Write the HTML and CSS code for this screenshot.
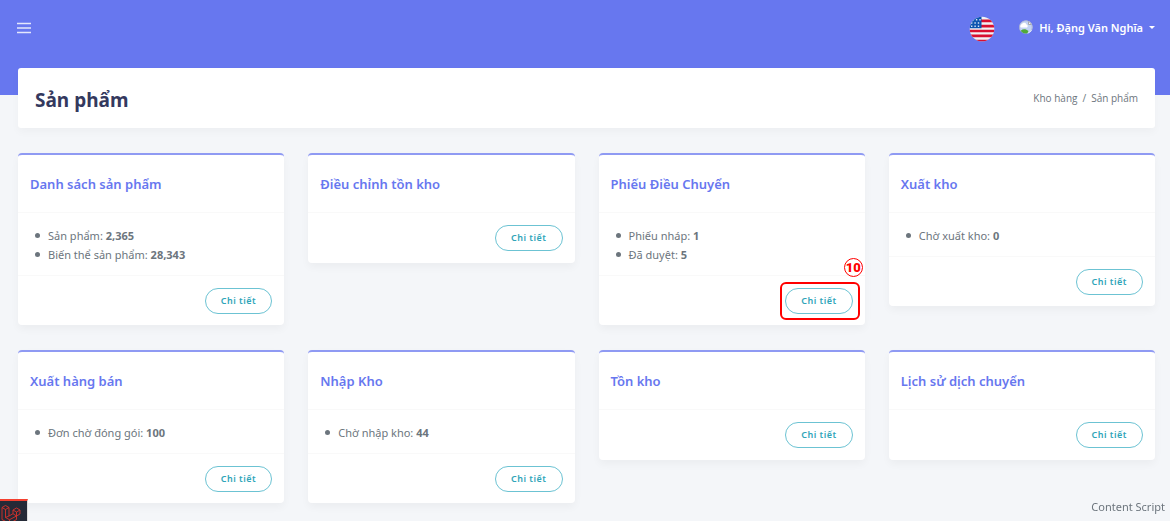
FILE: index.html
```
<!DOCTYPE html>
<html lang="vi">
<head>
<meta charset="utf-8">
<meta name="viewport" content="width=device-width, initial-scale=1">
<title>Sản phẩm</title>
<link rel="stylesheet" href="styles.css">
</head>
<body>
<header class="navbar">
  <button class="menu-toggle" type="button" aria-label="Menu">
    <svg width="14" height="12" viewBox="0 0 14 12"><path d="M0 1.5h14M0 6h14M0 10.5h14" stroke="#e4e7fc" stroke-width="1.6"/></svg>
  </button>
  <div class="navbar-right">
    <a class="language" href="#" aria-label="English">
      <svg width="26" height="26" viewBox="0 0 26 26">
        <defs><clipPath id="round"><circle cx="13" cy="13" r="12.3"/></clipPath></defs>
        <g clip-path="url(#round)">
          <path fill="#f2f2f4" d="M0 0h26v26H0z"/>
          <path d="M12 4.800h14M12 10.200h14M0 15h26M0 19.800h26M0 25h26" stroke="#d80f30" stroke-width="2.7"/>
          <path fill="#0b55b0" d="M0 0h12.5v12.3H0z"/>
          <path d="M3.500 3.700h9M2 7h10M2 10.200h10" stroke="#d5e2f3" stroke-width="1.400" stroke-dasharray="1.400 2"/>
        </g>
      </svg>
    </a>
    <button class="user" type="button">
      <svg class="avatar" width="14" height="14" viewBox="0 0 14 14">
        <defs><clipPath id="avatar-shape"><circle cx="7" cy="7" r="6.600"/></clipPath></defs>
        <g clip-path="url(#avatar-shape)">
          <path fill="#c2d3f4" d="M0 0h14v14H0z"/>
          <path fill="#fff" d="M2 7.500a2 2 0 0 1 1-3.500 2.500 2.500 0 0 1 4.500.5 1.700 1.700 0 0 1 .5 3z"/>
          <path fill="#51a938" d="M0 14c1-4 4-5.500 7-4.500L9.500 11 8 14z"/>
          <path fill="#f4f4f4" d="M8 14l6-5v2l-4 3z"/>
          <path fill="#6777ef" d="M10 14l4-3.500V14z"/>
          <path fill="#f4f4f4" stroke="#999" stroke-width=".8" d="M9.500 1v3.500H13z"/>
        </g>
        <path d="M12.500 10A6.400 6.400 0 1 0 2 11.500" fill="none" stroke="#b0b5cf" stroke-width=".8"/>
      </svg>
      <span>Hi, Đặng Văn Nghĩa</span>
      <span class="caret"></span>
    </button>
  </div>
</header>

<main class="content">
  <section class="page-head">
    <h1>Sản phẩm</h1>
    <nav class="breadcrumb" aria-label="Breadcrumb">
      <a href="#">Kho hàng</a><span>/</span><span>Sản phẩm</span>
    </nav>
  </section>

  <div class="cards">
    <article class="card">
      <h2>Danh sách sản phẩm</h2>
      <ul><li>Sản phẩm: <b>2,365</b></li><li>Biến thể sản phẩm: <b>28,343</b></li></ul>
      <footer><a class="btn" href="#">Chi tiết</a></footer>
    </article>
    <article class="card">
      <h2>Điều chỉnh tồn kho</h2>
      <footer><a class="btn" href="#">Chi tiết</a></footer>
    </article>
    <article class="card">
      <h2>Phiếu Điều Chuyển</h2>
      <ul><li>Phiếu nháp: <b>1</b></li><li>Đã duyệt: <b>5</b></li></ul>
      <footer><span class="marked"><a class="btn" href="#">Chi tiết</a><span class="outline"></span><span class="step">10</span></span></footer>
    </article>
    <article class="card">
      <h2>Xuất kho</h2>
      <ul><li>Chờ xuất kho: <b>0</b></li></ul>
      <footer><a class="btn" href="#">Chi tiết</a></footer>
    </article>
    <article class="card">
      <h2>Xuất hàng bán</h2>
      <ul><li>Đơn chờ đóng gói: <b>100</b></li></ul>
      <footer><a class="btn" href="#">Chi tiết</a></footer>
    </article>
    <article class="card">
      <h2>Nhập Kho</h2>
      <ul><li>Chờ nhập kho: <b>44</b></li></ul>
      <footer><a class="btn" href="#">Chi tiết</a></footer>
    </article>
    <article class="card">
      <h2>Tồn kho</h2>
      <footer><a class="btn" href="#">Chi tiết</a></footer>
    </article>
    <article class="card">
      <h2>Lịch sử dịch chuyển</h2>
      <footer><a class="btn" href="#">Chi tiết</a></footer>
    </article>
  </div>
</main>

<div class="script-note">Content Script</div>
<button class="debugbar" type="button" aria-label="Debugbar">
  <svg width="20" height="20" viewBox="0 0 20 20" fill="none" stroke="#d8322a" stroke-width=".9" stroke-linejoin="round">
    <path d="M1 3.500 4.500 1.500 8 3.500v8.500l4-2.300V6l3.500-2L19 6v4l-3.500 2v3.500L8.500 19.500 1 15.500zM1 3.500l3.500 2 3.500-2M4.500 5.500v8l4 2.200 7-3.700M12 6l3.500 2L19 6M15.500 8v4L12 9.700M8 12l-3.500 1.500M8.500 15.700v3.800"/>
  </svg>
</button>
</body>
</html>
```
FILE: styles.css
```
* { box-sizing: border-box; }

body {
  margin: 0;
  background: #f4f6f9;
  color: #6c757d;
  font: 11px/19px "Noto Sans", sans-serif;
}

a { color: inherit; text-decoration: none; }

button {
  padding: 0;
  border: 0;
  background: none;
  color: inherit;
  font: inherit;
}

.navbar {
  display: flex;
  justify-content: space-between;
  align-items: flex-start;
  height: 95px;
  padding: 16px 15px 0 17px;
  background: #6777ef;
  color: #fff;
}

.menu-toggle,
.language,
.user {
  display: flex;
  align-items: center;
  height: 24px;
}

.language { height: 26px; }

.navbar-right {
  display: flex;
  gap: 24px;
}

.user {
  gap: 6px;
  height: 22px;
  font-weight: 600;
}

.caret {
  border: 3px solid transparent;
  border-top-color: #fff;
  border-bottom: 0;
}

.content { padding: 0 15px 16px 18px; }

.page-head {
  display: flex;
  justify-content: space-between;
  align-items: center;
  min-height: 60px;
  margin: -27px 0 25px;
  padding: 0 17px;
  border-radius: 3px;
  background: #fff;
  box-shadow: 0 4px 8px rgba(0, 0, 0, .03);
}

h1 {
  margin: 4px 0 0;
  color: #34395e;
  font-size: 19px;
  font-weight: 700;
  line-height: 24px;
}

.breadcrumb {
  display: flex;
  gap: 5px;
  font-family: "Open Sans", "Noto Sans", sans-serif;
  font-size: 10px;
}

.cards {
  display: grid;
  grid-template-columns: repeat(4, 1fr);
  align-items: start;
  gap: 25px 24px;
}

.card {
  border-top: 2px solid #8f9af3;
  border-radius: 4px;
  background: #fff;
  box-shadow: 0 4px 8px rgba(0, 0, 0, .04);
}

.card h2 {
  margin: 0;
  padding: 18px 12px 17px;
  border-bottom: 1px solid #f9f9f9;
  color: #6777ef;
  font-size: 13px;
  font-weight: 600;
  line-height: 22px;
}

.card ul {
  margin: 0;
  padding: 13px 12px 11px 30px;
  border-bottom: 1px solid #f9f9f9;
  list-style: none;
}

.card li::before {
  content: "";
  display: inline-block;
  width: 5px;
  height: 5px;
  margin: 0 8px 2px -13px;
  border-radius: 50%;
  background: #6c757d;
}

.card footer {
  display: flex;
  justify-content: flex-end;
  padding: 12px 12px 11px;
}

.card h2 + footer { padding-bottom: 12px; }

.btn {
  display: block;
  padding: 0 15px;
  border: 1px solid #6cc3d3;
  border-radius: 13px;
  color: #2fa5b9;
  font-size: 9px;
  font-weight: 600;
  line-height: 24px;
  letter-spacing: .5px;
}

.marked { position: relative; }

.outline {
  position: absolute;
  inset: -6px -7px -6px -5px;
  border: 2px solid #f00;
  border-radius: 6px;
  pointer-events: none;
}

.step {
  position: absolute;
  top: -30px;
  right: -10px;
  width: 19px;
  height: 19px;
  border: 1px solid #f00;
  border-radius: 50%;
  color: #f00;
  font: 900 13px/17px Roboto, sans-serif;
  text-align: center;
}

.script-note {
  position: fixed;
  right: 5px;
  bottom: 5px;
}

.debugbar {
  position: fixed;
  left: 0;
  bottom: 0;
  width: 28px;
  height: 22px;
  padding: 3px 0 0 1px;
  overflow: hidden;
  border-top: 2px solid #f4402f;
  border-right: 1px solid #ddd;
  background: #252a37;
  text-align: left;
}
```
